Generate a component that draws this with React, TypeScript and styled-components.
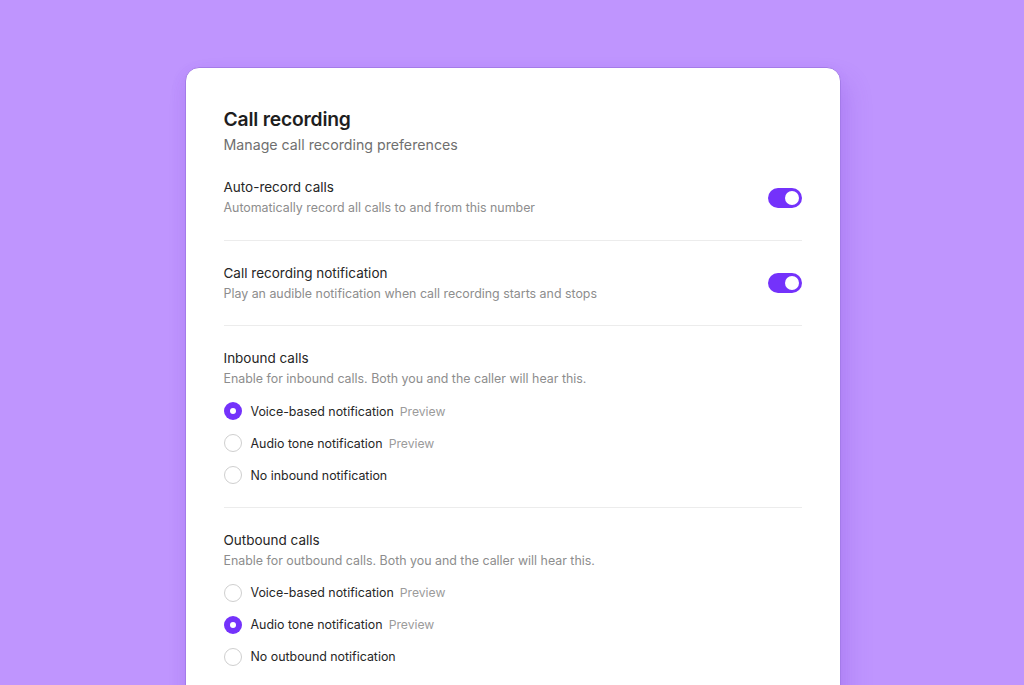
import React, { useState } from "react";
import styled, { createGlobalStyle } from "styled-components";

const Global = createGlobalStyle`
  html, body { margin: 0; padding: 0; }
  body {
    background: #bf95fe;
    font-family: Inter, "Noto Sans", "Liberation Sans", sans-serif;
    -webkit-font-smoothing: antialiased;
  }
`;

const Page = styled.div`
  width: 1024px;
  height: 685px;
  overflow: hidden;
  display: flex;
  justify-content: center;
  padding-top: 67px;
  padding-left: 1px;
  box-sizing: border-box;
`;

const Card = styled.div`
  width: 656px;
  height: 700px;
  box-sizing: border-box;
  background: #ffffff;
  border: 1.5px solid #a47be9;
  border-radius: 14px;
  box-shadow: 8px 14px 24px rgba(110, 50, 210, 0.18), -2px 4px 14px rgba(110, 50, 210, 0.08);
  padding: 39px 38px 0 38px;
`;

const Header = styled.div`
  display: flex;
  flex-direction: column;
  gap: 4px;
`;

const Title = styled.h1`
  margin: 0;
  font-size: 19.3px;
  line-height: 24px;
  font-weight: 600;
  color: #1e1e1e;
  letter-spacing: -0.2px;
`;

const Subtitle = styled.p`
  margin: 0;
  font-size: 14.2px;
  line-height: 20px;
  color: #6f6f6f;
`;

const Section = styled.div<{ $last?: boolean }>`
  padding: 22px 0 21.5px;
  border-bottom: ${(p) => (p.$last ? "none" : "1px solid #ececec")};
`;

const Row = styled.div`
  display: flex;
  align-items: center;
  justify-content: space-between;
`;

const Texts = styled.div`
  display: flex;
  flex-direction: column;
  gap: 1px;
`;

const ItemTitle = styled.div`
  font-size: 13.5px;
  line-height: 20px;
  color: #262626;
`;

const ItemDesc = styled.div`
  font-size: 12.4px;
  line-height: 20px;
  color: #8d8d8d;
`;

const Toggle = styled.button<{ $on: boolean }>`
  width: 34px;
  height: 20px;
  border: none;
  padding: 3px;
  border-radius: 10px;
  background: ${(p) => (p.$on ? "#7432fb" : "#d6d6d6")};
  display: flex;
  justify-content: ${(p) => (p.$on ? "flex-end" : "flex-start")};
  cursor: pointer;
`;

const Knob = styled.span`
  width: 14px;
  height: 14px;
  border-radius: 50%;
  background: #ffffff;
`;

const RadioGroup = styled.div`
  margin-top: 12px;
  display: flex;
  flex-direction: column;
  gap: 12px;
`;

const RadioRow = styled.label`
  display: flex;
  align-items: center;
  height: 20px;
  cursor: pointer;
`;

const RadioCircle = styled.span<{ $checked: boolean }>`
  width: 18px;
  height: 18px;
  box-sizing: border-box;
  border-radius: 50%;
  border: ${(p) => (p.$checked ? "none" : "1.5px solid #cfcfcf")};
  background: ${(p) => (p.$checked ? "#7432fb" : "#fff")};
  display: flex;
  align-items: center;
  justify-content: center;
  margin-right: 9px;
  flex-shrink: 0;
  &::after {
    content: "";
    display: ${(p) => (p.$checked ? "block" : "none")};
    width: 6px;
    height: 6px;
    border-radius: 50%;
    background: #fff;
  }
`;

const RadioLabel = styled.span`
  font-size: 12.4px;
  color: #262626;
`;

const Preview = styled.span`
  font-size: 12.2px;
  color: #9b9b9b;
  margin-left: 6px;
`;

type Opt = { label: string; preview?: boolean };

function Radios({ options, initial }: { options: Opt[]; initial: number }) {
  const [sel, setSel] = useState(initial);
  return (
    <RadioGroup>
      {options.map((o, i) => (
        <RadioRow key={o.label} onClick={() => setSel(i)}>
          <RadioCircle $checked={sel === i} />
          <RadioLabel>{o.label}</RadioLabel>
          {o.preview && <Preview>Preview</Preview>}
        </RadioRow>
      ))}
    </RadioGroup>
  );
}

function ToggleRow({ title, desc }: { title: string; desc: string }) {
  const [on, setOn] = useState(true);
  return (
    <Row>
      <Texts>
        <ItemTitle>{title}</ItemTitle>
        <ItemDesc>{desc}</ItemDesc>
      </Texts>
      <Toggle $on={on} onClick={() => setOn(!on)} aria-label={title}>
        <Knob />
      </Toggle>
    </Row>
  );
}

export default function App() {
  return (
    <>
      <Global />
      <Page>
        <Card>
          <Header>
            <Title>Call recording</Title>
            <Subtitle>Manage call recording preferences</Subtitle>
          </Header>
          <Section>
            <ToggleRow
              title="Auto-record calls"
              desc="Automatically record all calls to and from this number"
            />
          </Section>
          <Section>
            <ToggleRow
              title="Call recording notification"
              desc="Play an audible notification when call recording starts and stops"
            />
          </Section>
          <Section>
            <Texts>
              <ItemTitle>Inbound calls</ItemTitle>
              <ItemDesc>Enable for inbound calls. Both you and the caller will hear this.</ItemDesc>
            </Texts>
            <Radios
              initial={0}
              options={[
                { label: "Voice-based notification", preview: true },
                { label: "Audio tone notification", preview: true },
                { label: "No inbound notification" },
              ]}
            />
          </Section>
          <Section $last>
            <Texts>
              <ItemTitle>Outbound calls</ItemTitle>
              <ItemDesc>Enable for outbound calls. Both you and the caller will hear this.</ItemDesc>
            </Texts>
            <Radios
              initial={1}
              options={[
                { label: "Voice-based notification", preview: true },
                { label: "Audio tone notification", preview: true },
                { label: "No outbound notification" },
              ]}
            />
          </Section>
        </Card>
      </Page>
    </>
  );
}
